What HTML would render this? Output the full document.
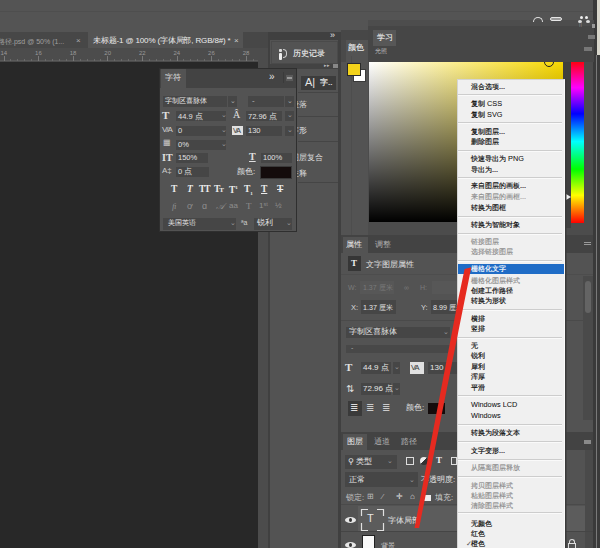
<!DOCTYPE html>
<html><head><meta charset="utf-8">
<style>
*{box-sizing:border-box}
html,body{margin:0;padding:0}
body{width:600px;height:548px;overflow:hidden;position:relative;background:#535353;font-family:"Liberation Sans",sans-serif;font-size:9px;color:#d8d8d8}
.a{position:absolute}
.t{position:absolute;white-space:nowrap;line-height:1}
/* menu */
#menu{position:absolute;left:457px;top:79px;width:108px;height:480px;background:#f0f0f0;border:1px solid #d4d4d4;border-right-color:#fafafa;box-shadow:1.5px 0 0 #3a3a3a}
.mi{position:absolute;left:13px;width:92px;height:11px;line-height:11px;font-size:7.3px;color:#111;white-space:nowrap;-webkit-text-stroke:0.18px #111}
.lat{-webkit-text-stroke:0.05px #111;font-size:7.3px}
.mi.dis{color:#8c8c8c;-webkit-text-stroke:0.15px #8c8c8c}
.mi.hl{background:#1f6cc6;color:#fff;-webkit-text-stroke:0.15px #fff;left:0px;width:106px;padding-left:13px;height:10px;line-height:10px}
.msep{position:absolute;left:0px;width:104px;height:2px;border-top:1px solid #cdcdcd;border-bottom:1px solid #fafafa}
.fld{position:absolute;background:#464646}
.dd{position:absolute;background:#4a4a4a}
</style></head><body>

<!-- top bar -->
<div class="a" style="left:0;top:0;width:600px;height:32px;background:#545454"></div>
<div class="a" style="left:0;top:11px;width:600px;height:1px;background:#4e4e4e"></div>

<!-- tab bar -->
<div class="a" style="left:0;top:32px;width:270px;height:16px;background:#474747"></div>
<div class="t" style="left:-2px;top:38px;font-size:7px;color:#a0a0a0">路径.psd @ 50% (1...</div>
<div class="t" style="left:76px;top:37px;font-size:8px;color:#aaa">×</div>
<div class="a" style="left:88px;top:32px;width:155px;height:16px;background:#545454"></div>
<div class="t" style="left:93px;top:37px;font-size:8px;color:#ececec;letter-spacing:-0.15px">未标题-1 @ 100% (字体局部, RGB/8#) *</div>
<div class="t" style="left:234px;top:37px;font-size:8px;color:#ccc">×</div>

<!-- ruler -->
<div class="a" style="left:0;top:48px;width:258px;height:14px;background:#4c4c4c"></div>
<div class="a" style="left:0;top:60px;width:258px;height:1px;background:#5a5a5a"></div>
<div class="t" style="left:0.5px;top:50px;font-size:6px;color:#999">14</div>
<div class="a" style="left:3.5px;top:56px;width:1px;height:5px;background:#7a7a7a"></div>
<div class="a" style="left:10.4px;top:59px;width:1px;height:2px;background:#6a6a6a"></div>
<div class="a" style="left:17.3px;top:59px;width:1px;height:2px;background:#6a6a6a"></div>
<div class="a" style="left:24.3px;top:59px;width:1px;height:2px;background:#6a6a6a"></div>
<div class="a" style="left:31.2px;top:59px;width:1px;height:2px;background:#6a6a6a"></div>
<div class="t" style="left:35.1px;top:50px;font-size:6px;color:#999">16</div>
<div class="a" style="left:38.1px;top:56px;width:1px;height:5px;background:#7a7a7a"></div>
<div class="a" style="left:45.0px;top:59px;width:1px;height:2px;background:#6a6a6a"></div>
<div class="a" style="left:51.9px;top:59px;width:1px;height:2px;background:#6a6a6a"></div>
<div class="a" style="left:58.9px;top:59px;width:1px;height:2px;background:#6a6a6a"></div>
<div class="a" style="left:65.8px;top:59px;width:1px;height:2px;background:#6a6a6a"></div>
<div class="t" style="left:69.7px;top:50px;font-size:6px;color:#999">18</div>
<div class="a" style="left:72.7px;top:56px;width:1px;height:5px;background:#7a7a7a"></div>
<div class="a" style="left:79.6px;top:59px;width:1px;height:2px;background:#6a6a6a"></div>
<div class="a" style="left:86.5px;top:59px;width:1px;height:2px;background:#6a6a6a"></div>
<div class="a" style="left:93.5px;top:59px;width:1px;height:2px;background:#6a6a6a"></div>
<div class="a" style="left:100.4px;top:59px;width:1px;height:2px;background:#6a6a6a"></div>
<div class="t" style="left:104.3px;top:50px;font-size:6px;color:#999">20</div>
<div class="a" style="left:107.3px;top:56px;width:1px;height:5px;background:#7a7a7a"></div>
<div class="a" style="left:114.2px;top:59px;width:1px;height:2px;background:#6a6a6a"></div>
<div class="a" style="left:121.1px;top:59px;width:1px;height:2px;background:#6a6a6a"></div>
<div class="a" style="left:128.1px;top:59px;width:1px;height:2px;background:#6a6a6a"></div>
<div class="a" style="left:135.0px;top:59px;width:1px;height:2px;background:#6a6a6a"></div>
<div class="t" style="left:138.9px;top:50px;font-size:6px;color:#999">22</div>
<div class="a" style="left:141.9px;top:56px;width:1px;height:5px;background:#7a7a7a"></div>
<div class="a" style="left:148.8px;top:59px;width:1px;height:2px;background:#6a6a6a"></div>
<div class="a" style="left:155.7px;top:59px;width:1px;height:2px;background:#6a6a6a"></div>
<div class="a" style="left:162.7px;top:59px;width:1px;height:2px;background:#6a6a6a"></div>
<div class="a" style="left:169.6px;top:59px;width:1px;height:2px;background:#6a6a6a"></div>
<div class="t" style="left:173.5px;top:50px;font-size:6px;color:#999">24</div>
<div class="a" style="left:176.5px;top:56px;width:1px;height:5px;background:#7a7a7a"></div>
<div class="a" style="left:183.4px;top:59px;width:1px;height:2px;background:#6a6a6a"></div>
<div class="a" style="left:190.3px;top:59px;width:1px;height:2px;background:#6a6a6a"></div>
<div class="a" style="left:197.3px;top:59px;width:1px;height:2px;background:#6a6a6a"></div>
<div class="a" style="left:204.2px;top:59px;width:1px;height:2px;background:#6a6a6a"></div>
<div class="t" style="left:208.1px;top:50px;font-size:6px;color:#999">26</div>
<div class="a" style="left:211.1px;top:56px;width:1px;height:5px;background:#7a7a7a"></div>
<div class="a" style="left:218.0px;top:59px;width:1px;height:2px;background:#6a6a6a"></div>
<div class="a" style="left:224.9px;top:59px;width:1px;height:2px;background:#6a6a6a"></div>
<div class="a" style="left:231.9px;top:59px;width:1px;height:2px;background:#6a6a6a"></div>
<div class="a" style="left:238.8px;top:59px;width:1px;height:2px;background:#6a6a6a"></div>
<div class="t" style="left:242.7px;top:50px;font-size:6px;color:#999">28</div>
<div class="a" style="left:245.7px;top:56px;width:1px;height:5px;background:#7a7a7a"></div>
<div class="a" style="left:252.6px;top:59px;width:1px;height:2px;background:#6a6a6a"></div>

<!-- canvas -->
<div class="a" style="left:0;top:62px;width:258px;height:486px;background:#282828"></div>
<div class="a" style="left:258px;top:48px;width:11px;height:500px;background:#4c4c4c"></div>
<div class="a" style="left:268px;top:32px;width:2px;height:516px;background:#404040"></div>

<!-- panel column (history etc) -->
<div class="a" style="left:270px;top:32px;width:69px;height:516px;background:#535353"></div>
<div class="a" style="left:270px;top:32px;width:69px;height:8px;background:#404040"></div>
<div class="t" style="left:330px;top:31px;font-size:9px;color:#e0e0e0">»</div>
<div class="a" style="left:271px;top:41px;width:67px;height:23px;background:#535353;border:1px solid #4a4a4a"></div>
<div class="a" style="left:279px;top:49px;width:3px;height:3px;background:#ddd;border-radius:1px"></div><div class="a" style="left:279px;top:53px;width:3px;height:7px;background:#eee;border-radius:1px"></div><div class="a" style="left:283px;top:49px;width:4px;height:9px;border:1px solid #ccc;border-left:none;border-radius:0 4px 4px 0"></div>
<div class="t" style="left:293px;top:50px;font-size:7.5px;color:#eaeaea;-webkit-text-stroke:0.15px #eaeaea">历史记录</div>
<div class="a" style="left:270px;top:64px;width:69px;height:5px;background:#434343"></div>
<div class="t" style="left:324px;top:63px;font-size:5px;color:#bbb">▸▸</div>
<div class="a" style="left:333px;top:64px;width:5px;height:4px;background:#888"></div>
<div class="a" style="left:298px;top:69px;width:41px;height:24px;background:#535353"></div>
<div class="a" style="left:301px;top:76px;width:35px;height:14px;background:#3c3c3c"></div>
<div class="t" style="left:305px;top:77px;font-size:11px;color:#e6e6e6">A|</div>
<div class="t" style="left:320px;top:79px;font-size:8px;color:#f0f0f0;-webkit-text-stroke:0.2px #f0f0f0">字..</div>
<div class="a" style="left:298px;top:92px;width:41px;height:1px;background:#454545"></div>
<div class="t" style="left:291px;top:101px;font-size:7.5px;color:#ddd">段落</div>
<div class="a" style="left:298px;top:116px;width:41px;height:1px;background:#454545"></div>
<div class="t" style="left:291px;top:127px;font-size:7.5px;color:#ddd">字形</div>
<div class="a" style="left:298px;top:141px;width:41px;height:1px;background:#454545"></div>
<div class="t" style="left:291px;top:154px;font-size:7.5px;color:#ddd">图层复合</div>
<div class="t" style="left:291px;top:170px;font-size:7.5px;color:#ddd">注释</div>
<div class="a" style="left:298px;top:182px;width:41px;height:1px;background:#454545"></div>

<div class="a" style="left:338px;top:32px;width:3px;height:516px;background:#404040"></div>

<!-- color mini column -->
<div class="a" style="left:341px;top:32px;width:28px;height:204px;background:#535353"></div>
<div class="a" style="left:341px;top:30px;width:28px;height:10px;background:#474747"></div><div class="a" style="left:341px;top:40px;width:5px;height:22px;background:#4a4a4a"></div>
<div class="t" style="left:348px;top:44px;font-size:7.5px;color:#eeeeee;-webkit-text-stroke:0.15px #eee">颜色</div>
<div class="a" style="left:351px;top:56px;width:1px;height:180px;background:#4d4d4d"></div>
<div class="a" style="left:353px;top:69px;width:13px;height:13px;background:#fff;border:1px solid #3a3a3a"></div>
<div class="a" style="left:347px;top:63px;width:14px;height:13px;background:#f3d21a;border:1px solid #2a2a2a"></div>

<!-- color panel -->
<div class="a" style="left:368px;top:20px;width:226px;height:216px;background:#4c4c4c"></div>
<div class="a" style="left:563px;top:58px;width:8px;height:170px;background:#3f3f3f"></div>
<div class="a" style="left:369px;top:62px;width:194px;height:160px;background:linear-gradient(to bottom,rgba(0,0,0,0),#000),linear-gradient(to right,#fff,#f8d800)"></div>
<div class="a" style="left:544px;top:57px;width:10px;height:10px;border:1px solid #222;border-radius:50%"></div>
<div class="a" style="left:571px;top:60px;width:13px;height:163px;background:linear-gradient(to bottom,#f00 0%,#f0f 17%,#00f 33%,#0ff 50%,#0f0 67%,#ff0 83%,#f00 100%)"></div>
<div class="a" style="left:566px;top:194px;width:0;height:0;border-left:5px solid #eee;border-top:3px solid transparent;border-bottom:3px solid transparent"></div>
<div class="a" style="left:593px;top:0;width:7px;height:548px;background:#3a3a3a"></div>
<div class="a" style="left:596px;top:55px;width:1px;height:493px;background:#7a7a7a"></div><div class="a" style="left:597px;top:0;width:3px;height:55px;background:#d9d7cc"></div>

<!-- learn panel (floating) -->
<div class="a" style="left:368px;top:20px;width:226px;height:42px;background:#464646"></div><div class="a" style="left:368px;top:20px;width:226px;height:6px;background:#4d4d4d"></div>
<div class="a" style="left:373px;top:30px;width:23px;height:16px;background:#575757"></div>
<div class="t" style="left:377px;top:34px;font-size:7.5px;color:#f0f0f0;-webkit-text-stroke:0.1px #f0f0f0">学习</div>
<div class="t" style="left:375px;top:48px;font-size:6px;color:#bbb">光照</div>
<div class="a" style="left:533px;top:17px;width:10px;height:5px;border:1.5px solid #e0e0e0;border-bottom:none;border-radius:5px 5px 0 0"></div>
<div class="a" style="left:550px;top:17px;width:12px;height:4px;border:1.5px solid #e6e6e6;border-radius:2px;background:#999"></div>
<div class="a" style="left:580px;top:16px;width:3px;height:3px;background:#eee;border-radius:50%"></div><div class="a" style="left:585px;top:16px;width:3px;height:3px;background:#eee;border-radius:50%"></div><div class="a" style="left:578px;top:20px;width:4px;height:3px;background:#ddd;border-radius:50%"></div><div class="a" style="left:586px;top:20px;width:4px;height:3px;background:#ddd;border-radius:50%"></div>
<div class="t" style="left:579px;top:23px;font-size:5px;color:#bbb">⁞⁞</div>
<div class="a" style="left:592px;top:24px;width:3px;height:4px;background:#999"></div>
<div class="a" style="left:588px;top:35px;width:7px;height:4px;background:#777"></div>
<div class="a" style="left:584px;top:47px;width:8px;height:4px;background:#777"></div>

<!-- properties panel -->
<div class="a" style="left:341px;top:235px;width:252px;height:197px;background:#535353"></div>
<div class="a" style="left:341px;top:235px;width:252px;height:18px;background:#434343"></div>
<div class="a" style="left:343px;top:237px;width:25px;height:16px;background:#535353"></div>
<div class="t" style="left:346px;top:241px;font-size:8px;color:#ececec">属性</div>
<div class="t" style="left:375px;top:241px;font-size:8px;color:#b0b0b0">调整</div>
<div class="a" style="left:584px;top:242px;width:7px;height:3px;border-top:1px solid #999;border-bottom:1px solid #999"></div>
<div class="a" style="left:348px;top:256px;width:13px;height:15px;background:#363636"></div>
<div class="t" style="left:351px;top:259px;font-size:9px;font-family:'Liberation Serif',serif;font-weight:bold;color:#eee">T</div>
<div class="t" style="left:366px;top:261px;font-size:8px;color:#e0e0e0">文字图层属性</div>
<div class="a" style="left:341px;top:274px;width:252px;height:1px;background:#4d4d4d"></div>
<div class="t" style="left:348px;top:284px;font-size:7px;color:#7a7a7a">W:</div>
<div class="a" style="left:360px;top:281px;width:34px;height:13px;background:#575757"></div>
<div class="t" style="left:363px;top:284px;font-size:7px;color:#7a7a7a">1.37 厘米</div>
<div class="t" style="left:404px;top:284px;font-size:7px;color:#7a7a7a">∞</div>
<div class="t" style="left:420px;top:284px;font-size:7px;color:#7a7a7a">H:</div>
<div class="a" style="left:432px;top:281px;width:26px;height:13px;background:#575757"></div>
<div class="t" style="left:351px;top:304px;font-size:7.5px;color:#d8d8d8">X:</div>
<div class="fld" style="left:361px;top:300px;width:35px;height:14px"></div>
<div class="t" style="left:363px;top:304px;font-size:7.2px;color:#e6e6e6">1.37 厘米</div>
<div class="t" style="left:421px;top:304px;font-size:7.5px;color:#d8d8d8">Y:</div>
<div class="fld" style="left:431px;top:300px;width:27px;height:14px"></div>
<div class="t" style="left:433px;top:304px;font-size:7.2px;color:#e6e6e6">8.99 厘米</div>
<div class="a" style="left:341px;top:320px;width:252px;height:1px;background:#4a4a4a"></div>
<div class="fld" style="left:346px;top:327px;width:99px;height:11px"></div>
<div class="t" style="left:349px;top:328px;font-size:8px;color:#e6e6e6">字制区喜脉体</div>
<div class="fld" style="left:442px;top:327px;width:8px;height:11px"></div>
<div class="a" style="left:346px;top:345px;width:106px;height:8px;background:#484848"></div>
<div class="t" style="left:351px;top:344px;font-size:7px;color:#aaa">-</div>
<div class="t" style="left:345px;top:362px;font-size:11px;font-family:'Liberation Serif',serif;font-weight:bold;color:#e0e0e0">T</div>
<div class="fld" style="left:361px;top:362px;width:30px;height:12px"></div>
<div class="t" style="left:363px;top:364px;font-size:8px;color:#e6e6e6">44.9 点</div>
<div class="fld" style="left:393px;top:362px;width:7px;height:12px"></div>
<div class="a" style="left:410px;top:362px;width:14px;height:12px;background:#e0e0e0"></div>
<div class="t" style="left:411px;top:364px;font-size:7.5px;color:#333;letter-spacing:-1px">VA</div>
<div class="fld" style="left:428px;top:362px;width:30px;height:12px"></div>
<div class="t" style="left:430px;top:364px;font-size:8px;color:#e6e6e6">130</div>
<div class="t" style="left:346px;top:384px;font-size:10px;color:#ddd">⇅</div>
<div class="fld" style="left:361px;top:383px;width:30px;height:12px"></div>
<div class="t" style="left:363px;top:385px;font-size:8px;color:#e6e6e6">72.96 点</div>
<div class="fld" style="left:393px;top:383px;width:7px;height:12px"></div><div class="t" style="left:394px;top:384px;font-size:7px;color:#999">⌄</div><div class="t" style="left:394px;top:363px;font-size:7px;color:#999">⌄</div><div class="t" style="left:443px;top:328px;font-size:7px;color:#999">⌄</div>
<div class="a" style="left:348px;top:401px;width:14px;height:15px;background:#3a3a3a"></div>
<div class="t" style="left:350px;top:403px;font-size:10px;color:#ddd">≣</div>
<div class="t" style="left:366px;top:403px;font-size:10px;color:#ccc">≣</div>
<div class="t" style="left:382px;top:403px;font-size:10px;color:#ccc">≣</div>
<div class="t" style="left:406px;top:404px;font-size:8px;color:#e0e0e0">颜色:</div>
<div class="a" style="left:428px;top:403px;width:17px;height:11px;background:#140c0c"></div>
<div class="a" style="left:583px;top:276px;width:10px;height:144px;background:#4a4a4a"></div><div class="a" style="left:585px;top:281px;width:6px;height:32px;background:#646464;border-radius:3px"></div>

<!-- layers panel -->
<div class="a" style="left:341px;top:432px;width:252px;height:116px;background:#535353"></div>
<div class="a" style="left:341px;top:432px;width:252px;height:18px;background:#434343"></div>
<div class="a" style="left:343px;top:434px;width:24px;height:16px;background:#535353"></div>
<div class="t" style="left:347px;top:438px;font-size:8px;color:#ececec">图层</div>
<div class="t" style="left:374px;top:438px;font-size:8px;color:#b0b0b0">通道</div>
<div class="t" style="left:401px;top:438px;font-size:8px;color:#b0b0b0">路径</div>
<div class="a" style="left:584px;top:440px;width:7px;height:4px;background:#8a8a8a"></div>
<div class="fld" style="left:345px;top:455px;width:52px;height:14px"></div>
<div class="t" style="left:348px;top:458px;font-size:8px;color:#e6e6e6">⚲ 类型</div>
<div class="t" style="left:387px;top:457px;font-size:7px;color:#999">⌄</div>
<div class="a" style="left:406px;top:457px;width:8px;height:8px;border:1px solid #ddd"></div>
<div class="a" style="left:420px;top:457px;width:8px;height:8px;border-radius:50%;background:linear-gradient(135deg,#eee 50%,#333 50%)"></div>
<div class="t" style="left:436px;top:456px;font-size:9px;font-family:'Liberation Serif',serif;font-weight:bold;color:#eee">T</div>
<div class="a" style="left:451px;top:457px;width:6px;height:8px;border:1px solid #ddd"></div>
<div class="fld" style="left:345px;top:472px;width:73px;height:15px"></div>
<div class="t" style="left:349px;top:476px;font-size:8px;color:#e6e6e6">正常</div>
<div class="t" style="left:409px;top:476px;font-size:7px;color:#999">⌄</div>
<div class="t" style="left:421px;top:476px;font-size:8px;color:#e0e0e0">不透明度:</div>
<div class="t" style="left:346px;top:494px;font-size:7.5px;color:#c0c0c0">锁定:</div>
<div class="t" style="left:367px;top:493px;font-size:8px;color:#bbb">⊞</div>
<div class="t" style="left:382px;top:493px;font-size:8px;color:#bbb">⁄</div>
<div class="t" style="left:396px;top:493px;font-size:8px;color:#ddd">✛</div>
<div class="t" style="left:410px;top:493px;font-size:8px;color:#ddd">⌂</div>
<div class="a" style="left:424px;top:495px;width:7px;height:6px;background:#eee"></div>
<div class="t" style="left:435px;top:494px;font-size:7.5px;color:#d0d0d0">填充:</div>
<div class="a" style="left:341px;top:504px;width:252px;height:1px;background:#4a4a4a"></div>
<div class="a" style="left:358px;top:506px;width:227px;height:25px;background:#5c5c5c"></div><div class="a" style="left:585px;top:450px;width:8px;height:98px;background:#4a4a4a"></div>
<div class="a" style="left:345px;top:517px;width:11px;height:6px;background:#e6e6e6;border-radius:50%"></div>
<div class="a" style="left:349px;top:518px;width:3px;height:4px;background:#333;border-radius:50%"></div>
<svg class="a" style="left:360px;top:508px" width="26" height="24"><path d="M1.5 8V1.5H8M17 1.5H23.5V8M23.5 15V22.5H17M8 22.5H1.5V15" stroke="#e0e0e0" stroke-width="1.2" fill="none"/></svg>
<div class="t" style="left:367px;top:513px;font-size:11px;color:#e6e6e6">T</div>
<div class="t" style="left:388px;top:517px;font-size:8px;color:#e6e6e6">字体局部</div>
<div class="a" style="left:341px;top:531px;width:252px;height:1px;background:#454545"></div>
<div class="a" style="left:345px;top:542px;width:11px;height:6px;background:#e6e6e6;border-radius:50%"></div>
<div class="a" style="left:349px;top:543px;width:3px;height:4px;background:#333;border-radius:50%"></div>
<div class="a" style="left:362px;top:535px;width:13px;height:14px;background:#fafafa;border:1px solid #222"></div>
<div class="t" style="left:381px;top:542px;font-size:7px;color:#ccc">背景</div>
<div class="a" style="left:569px;top:539px;width:6px;height:5px;border:1px solid #ddd;border-bottom:none;border-radius:3px 3px 0 0"></div><div class="a" style="left:568px;top:543px;width:8px;height:6px;border:1px solid #ddd"></div>

<!-- character panel (floating) -->
<div class="a" style="left:159px;top:68px;width:138px;height:164px;background:#535353;border:1px solid #2f2f2f"></div>
<div class="a" style="left:160px;top:69px;width:136px;height:19px;background:#434343"></div>
<div class="a" style="left:161px;top:69px;width:25px;height:19px;background:#535353"></div>
<div class="t" style="left:165px;top:74px;font-size:7.5px;color:#e4e4e4">字符</div>
<div class="t" style="left:269px;top:72px;font-size:10px;color:#e0e0e0">»</div>
<div class="a" style="left:283px;top:72px;width:1px;height:11px;background:#3a3a3a"></div>
<div class="a" style="left:285px;top:74px;width:9px;height:8px;background:#5a5a5a;border:1px solid #444"></div>
<div class="a" style="left:287px;top:77px;width:5px;height:2px;border-top:1px solid #999;border-bottom:1px solid #999"></div>
<!-- row1 -->
<div class="fld" style="left:163px;top:96px;width:64px;height:11px"></div>
<div class="t" style="left:165px;top:97px;font-size:7.4px;color:#e6e6e6">字制区喜脉体</div>
<div class="fld" style="left:228px;top:96px;width:9px;height:11px"></div>
<div class="t" style="left:230px;top:97px;font-size:7px;color:#aaa">⌄</div>
<div class="fld" style="left:248px;top:96px;width:36px;height:11px"></div>
<div class="t" style="left:252px;top:97px;font-size:8px;color:#bbb">-</div>
<div class="fld" style="left:285px;top:96px;width:9px;height:11px"></div>
<div class="t" style="left:287px;top:97px;font-size:7px;color:#aaa">⌄</div>
<!-- row2 -->
<div class="t" style="left:162px;top:110px;font-size:11px;font-family:'Liberation Serif',serif;font-weight:bold;color:#e0e0e0">T</div>
<div class="fld" style="left:176px;top:111px;width:50px;height:10px"></div>
<div class="t" style="left:178px;top:113px;font-size:7.5px;color:#e0e0e0">44.9 点</div>
<div class="t" style="left:221px;top:111px;font-size:7px;color:#999">⌄</div>
<div class="t" style="left:233px;top:110px;font-size:10px;font-family:'Liberation Serif',serif;color:#e0e0e0">Â</div>
<div class="fld" style="left:246px;top:111px;width:36px;height:10px"></div>
<div class="t" style="left:248px;top:113px;font-size:7.5px;color:#e0e0e0">72.96 点</div>
<div class="fld" style="left:285px;top:111px;width:9px;height:10px"></div>
<div class="t" style="left:287px;top:111px;font-size:7px;color:#999">⌄</div>
<!-- row3 -->
<div class="t" style="left:162px;top:126px;font-size:8px;color:#d0d0d0;letter-spacing:-1px">V/A</div>
<div class="fld" style="left:176px;top:126px;width:50px;height:10px"></div>
<div class="t" style="left:178px;top:127px;font-size:7.5px;color:#e0e0e0">0</div>
<div class="t" style="left:221px;top:126px;font-size:7px;color:#999">⌄</div>
<div class="a" style="left:232px;top:126px;width:11px;height:9px;background:#e0e0e0"></div>
<div class="t" style="left:233px;top:127px;font-size:7px;color:#333;letter-spacing:-1px">VA</div>
<div class="fld" style="left:246px;top:126px;width:36px;height:10px"></div>
<div class="t" style="left:248px;top:127px;font-size:7.5px;color:#e0e0e0">130</div>
<div class="fld" style="left:285px;top:126px;width:9px;height:10px"></div>
<div class="t" style="left:287px;top:126px;font-size:7px;color:#999">⌄</div>
<!-- row4 -->
<div class="t" style="left:163px;top:139px;font-size:8px;color:#ccc">▦</div>
<div class="fld" style="left:176px;top:140px;width:50px;height:10px"></div>
<div class="t" style="left:178px;top:141px;font-size:7.5px;color:#e0e0e0">0%</div>
<div class="t" style="left:221px;top:140px;font-size:7px;color:#999">⌄</div>
<!-- row5 -->
<div class="t" style="left:162px;top:153px;font-size:10px;font-family:'Liberation Serif',serif;font-weight:bold;color:#e0e0e0">IT</div>
<div class="fld" style="left:176px;top:153px;width:32px;height:10px"></div>
<div class="t" style="left:178px;top:154px;font-size:7.5px;color:#e0e0e0">150%</div>
<div class="t" style="left:249px;top:152px;font-size:10px;font-family:'Liberation Serif',serif;font-weight:bold;color:#e0e0e0;text-decoration:underline">T</div>
<div class="fld" style="left:261px;top:153px;width:31px;height:10px"></div>
<div class="t" style="left:263px;top:154px;font-size:7.5px;color:#e0e0e0">100%</div>
<!-- row6 -->
<div class="t" style="left:162px;top:167px;font-size:8px;color:#ccc">A‡</div>
<div class="fld" style="left:176px;top:167px;width:33px;height:10px"></div>
<div class="t" style="left:178px;top:168px;font-size:7.5px;color:#e0e0e0">0 点</div>
<div class="t" style="left:237px;top:168px;font-size:8px;color:#e0e0e0">颜色:</div>
<div class="a" style="left:260px;top:166px;width:32px;height:13px;background:#140c0c;border:1px solid #3a3a3a"></div>
<!-- row7 -->
<div class="t" style="left:171px;top:185px;font-size:9.5px;font-family:'Liberation Serif',serif;font-weight:bold;color:#eaeaea">T</div>
<div class="t" style="left:187px;top:185px;font-size:9.5px;font-family:'Liberation Serif',serif;font-weight:bold;font-style:italic;color:#eaeaea">T</div>
<div class="t" style="left:199px;top:185px;font-size:9.5px;font-family:'Liberation Serif',serif;font-weight:bold;color:#eaeaea;letter-spacing:-1px">TT</div>
<div class="t" style="left:214px;top:185px;font-size:9.5px;font-family:'Liberation Serif',serif;font-weight:bold;color:#eaeaea;letter-spacing:-1px">T<span style="font-size:7px">T</span></div>
<div class="t" style="left:229px;top:185px;font-size:9.5px;font-family:'Liberation Serif',serif;font-weight:bold;color:#eaeaea">T<sup style="font-size:5px">1</sup></div>
<div class="t" style="left:244px;top:185px;font-size:9.5px;font-family:'Liberation Serif',serif;font-weight:bold;color:#eaeaea">T<sub style="font-size:5px">1</sub></div>
<div class="t" style="left:261px;top:185px;font-size:9.5px;font-family:'Liberation Serif',serif;font-weight:bold;color:#eaeaea;text-decoration:underline">T</div>
<div class="t" style="left:277px;top:185px;font-size:9.5px;font-family:'Liberation Serif',serif;font-weight:bold;color:#eaeaea;text-decoration:line-through">T</div>
<!-- row8 -->
<div class="t" style="left:172px;top:202px;font-size:9px;font-family:'Liberation Serif',serif;font-style:italic;color:#8e8e8e">ﬁ</div>
<div class="t" style="left:187px;top:202px;font-size:9px;color:#8e8e8e">ơ</div>
<div class="t" style="left:202px;top:202px;font-size:9px;color:#8e8e8e">ɑ</div>
<div class="t" style="left:216px;top:202px;font-size:9px;font-family:'Liberation Serif',serif;font-style:italic;color:#8e8e8e">𝒜</div>
<div class="t" style="left:229px;top:202px;font-size:8px;color:#8e8e8e">aa</div>
<div class="t" style="left:246px;top:202px;font-size:9px;font-family:'Liberation Serif',serif;color:#8e8e8e">T</div>
<div class="t" style="left:259px;top:202px;font-size:8px;color:#8e8e8e">1ˢᵗ</div>
<div class="t" style="left:275px;top:202px;font-size:8px;color:#8e8e8e">½</div>
<!-- row9 -->
<div class="fld" style="left:163px;top:218px;width:73px;height:12px"></div>
<div class="t" style="left:168px;top:219px;font-size:7.4px;color:#e6e6e6">美国英语</div>
<div class="t" style="left:230px;top:219px;font-size:7px;color:#999">⌄</div>
<div class="t" style="left:241px;top:219px;font-size:7px;color:#ccc">ªa</div>
<div class="fld" style="left:254px;top:218px;width:38px;height:12px"></div>
<div class="t" style="left:257px;top:219px;font-size:8px;color:#e6e6e6">锐利</div>
<div class="t" style="left:286px;top:219px;font-size:7px;color:#999">⌄</div>

<!-- context menu -->
<div id="menu">
<div class="mi" style="top:1.0px">混合选项...</div>
<div class="msep" style="top:13.8px"></div>
<div class="mi" style="top:18.0px">复制 <span class="lat">CSS</span></div>
<div class="mi" style="top:28.9px">复制 <span class="lat">SVG</span></div>
<div class="msep" style="top:42.1px"></div>
<div class="mi" style="top:45.8px">复制图层...</div>
<div class="mi" style="top:55.5px">删除图层</div>
<div class="msep" style="top:69.9px"></div>
<div class="mi" style="top:73.0px">快速导出为 <span class="lat">PNG</span></div>
<div class="mi" style="top:84.0px">导出为...</div>
<div class="msep" style="top:97.0px"></div>
<div class="mi" style="top:100.0px">来自图层的画板...</div>
<div class="mi dis" style="top:111.0px">来自图层的画框...</div>
<div class="mi" style="top:121.8px">转换为图框</div>
<div class="msep" style="top:136.0px"></div>
<div class="mi" style="top:139.0px">转换为智能对象</div>
<div class="msep" style="top:153.0px"></div>
<div class="mi dis" style="top:156.3px">链接图层</div>
<div class="mi dis" style="top:166.0px">选择链接图层</div>
<div class="msep" style="top:180.3px"></div>
<div class="mi hl" style="top:183.5px">栅格化文字</div>
<div class="mi dis" style="top:194.5px">栅格化图层样式</div>
<div class="mi" style="top:205.0px">创建工作路径</div>
<div class="mi" style="top:214.8px">转换为形状</div>
<div class="msep" style="top:229.0px"></div>
<div class="mi" style="top:232.5px">横排</div>
<div class="mi" style="top:243.3px">竖排</div>
<div class="msep" style="top:257.0px"></div>
<div class="mi" style="top:259.7px">无</div>
<div class="mi" style="top:270.4px">锐利</div>
<div class="mi" style="top:280.8px">犀利</div>
<div class="mi" style="top:291.4px">浑厚</div>
<div class="mi" style="top:302.0px">平滑</div>
<div class="msep" style="top:315.2px"></div>
<div class="mi" style="top:319.2px"><span class="lat">Windows LCD</span></div>
<div class="mi" style="top:330.0px"><span class="lat">Windows</span></div>
<div class="msep" style="top:343.7px"></div>
<div class="mi" style="top:347.3px">转换为段落文本</div>
<div class="msep" style="top:360.9px"></div>
<div class="mi" style="top:364.7px">文字变形...</div>
<div class="msep" style="top:378.5px"></div>
<div class="mi dis" style="top:382.0px">从隔离图层释放</div>
<div class="msep" style="top:395.5px"></div>
<div class="mi dis" style="top:400.0px">拷贝图层样式</div>
<div class="mi dis" style="top:409.5px">粘贴图层样式</div>
<div class="mi dis" style="top:419.5px">清除图层样式</div>
<div class="msep" style="top:432.3px"></div>
<div class="mi" style="top:438.0px">无颜色</div>
<div class="mi" style="top:448.3px">红色</div>
<div class="mi" style="top:458.3px">橙色</div>
<div class="t" style="left:8px;top:460px;font-size:7px;color:#555">✓</div>
</div>

<!-- red arrow -->
<svg class="a" style="left:0;top:0" width="600" height="548">
<polygon points="471.3,267.2 465.1,298.0 444.6,400.0 419.1,528.0 414.5,528.0 439.0,400.0 458.5,298.0 464.6,269.0" fill="#e62a20"/>
</svg>
</body></html>
